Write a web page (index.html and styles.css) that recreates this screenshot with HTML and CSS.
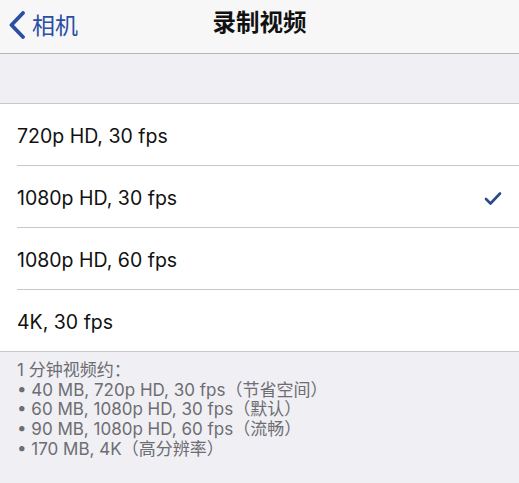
FILE: index.html
```html
<!DOCTYPE html>
<html lang="zh">
<head>
<meta charset="utf-8">
<link rel="stylesheet" href="styles.css">
</head>
<body>
<div class="page">
  <header class="nav">
    <div class="back">
      <svg class="chev" width="19" height="28" viewBox="0 0 19 28"><polyline points="15,2 3.5,14 15,26" fill="none" stroke="#2b4fa3" stroke-width="3.8" stroke-linecap="round" stroke-linejoin="round"/></svg>
      <span class="back-label">相机</span>
    </div>
    <div class="title">录制视频</div>
  </header>
  <div class="gap"></div>
  <ul class="list">
    <li class="row"><span>720p HD, 30 fps</span></li>
    <li class="row"><span>1080p HD, 30 fps</span>
      <svg class="check" width="18" height="15" viewBox="0 0 18 15"><polyline points="2,8 6.5,12.5 16,2.5" fill="none" stroke="#2b4a8c" stroke-width="2.6" stroke-linecap="round" stroke-linejoin="round"/></svg>
    </li>
    <li class="row"><span>1080p HD, 60 fps</span></li>
    <li class="row last"><span>4K, 30 fps</span></li>
  </ul>
  <div class="footer">
    <p>1 分钟视频约：</p>
    <p>• 40 MB, 720p HD, 30 fps（节省空间）</p>
    <p>• 60 MB, 1080p HD, 30 fps（默认）</p>
    <p>• 90 MB, 1080p HD, 60 fps（流畅）</p>
    <p>• 170 MB, 4K（高分辨率）</p>
  </div>
</div>
</body>
</html>
```
FILE: styles.css
```css
* { box-sizing: border-box; }
html, body { margin: 0; padding: 0; }
body {
  width: 519px;
  height: 483px;
  overflow: hidden;
  background: #efeff4;
  font-family: Inter, "Noto Sans CJK SC", sans-serif;
}
.page { display: flex; flex-direction: column; height: 483px; }
.nav {
  height: 54px;
  background: #f7f7f7;
  border-bottom: 1px solid #b8b8bc;
  position: relative;
  display: flex;
  align-items: center;
}
.back {
  display: flex;
  align-items: center;
  padding-left: 8px;
  gap: 5px;
  color: #2b4fa3;
  font-family: "Noto Sans CJK SC", sans-serif;
  font-size: 23px;
  margin-top: -5px;
}
.chev { margin-top: 1px; }
.title {
  position: absolute;
  left: 0; right: 0; top: 0; height: 53px;
  display: flex;
  align-items: center;
  justify-content: center;
  font-family: "Noto Sans CJK SC", sans-serif;
  font-size: 23.5px;
  font-weight: 600;
  color: #111;
  margin-top: -6px;
}
.gap { height: 50px; border-bottom: 1px solid #c8c7cc; }
.list {
  list-style: none;
  margin: 0;
  padding: 0 0 0 17px;
  background: #fff;
  border-bottom: 1px solid #c8c7cc;
}
.row {
  height: 62px;
  border-bottom: 1px solid #c8c7cc;
  display: flex;
  align-items: center;
  justify-content: space-between;
  padding-right: 17px;
  font-size: 19.5px;
  color: #111;
}
.row span { margin-top: 3px; }
.row.last { border-bottom: none; height: 61px; }
.check { margin-top: 4px; }
.footer {
  flex: 1;
  padding: 9px 17px 0;
  font-size: 17px;
  line-height: 19.7px;
  color: #6d6d72;
}
.footer p { margin: 0; }
```
